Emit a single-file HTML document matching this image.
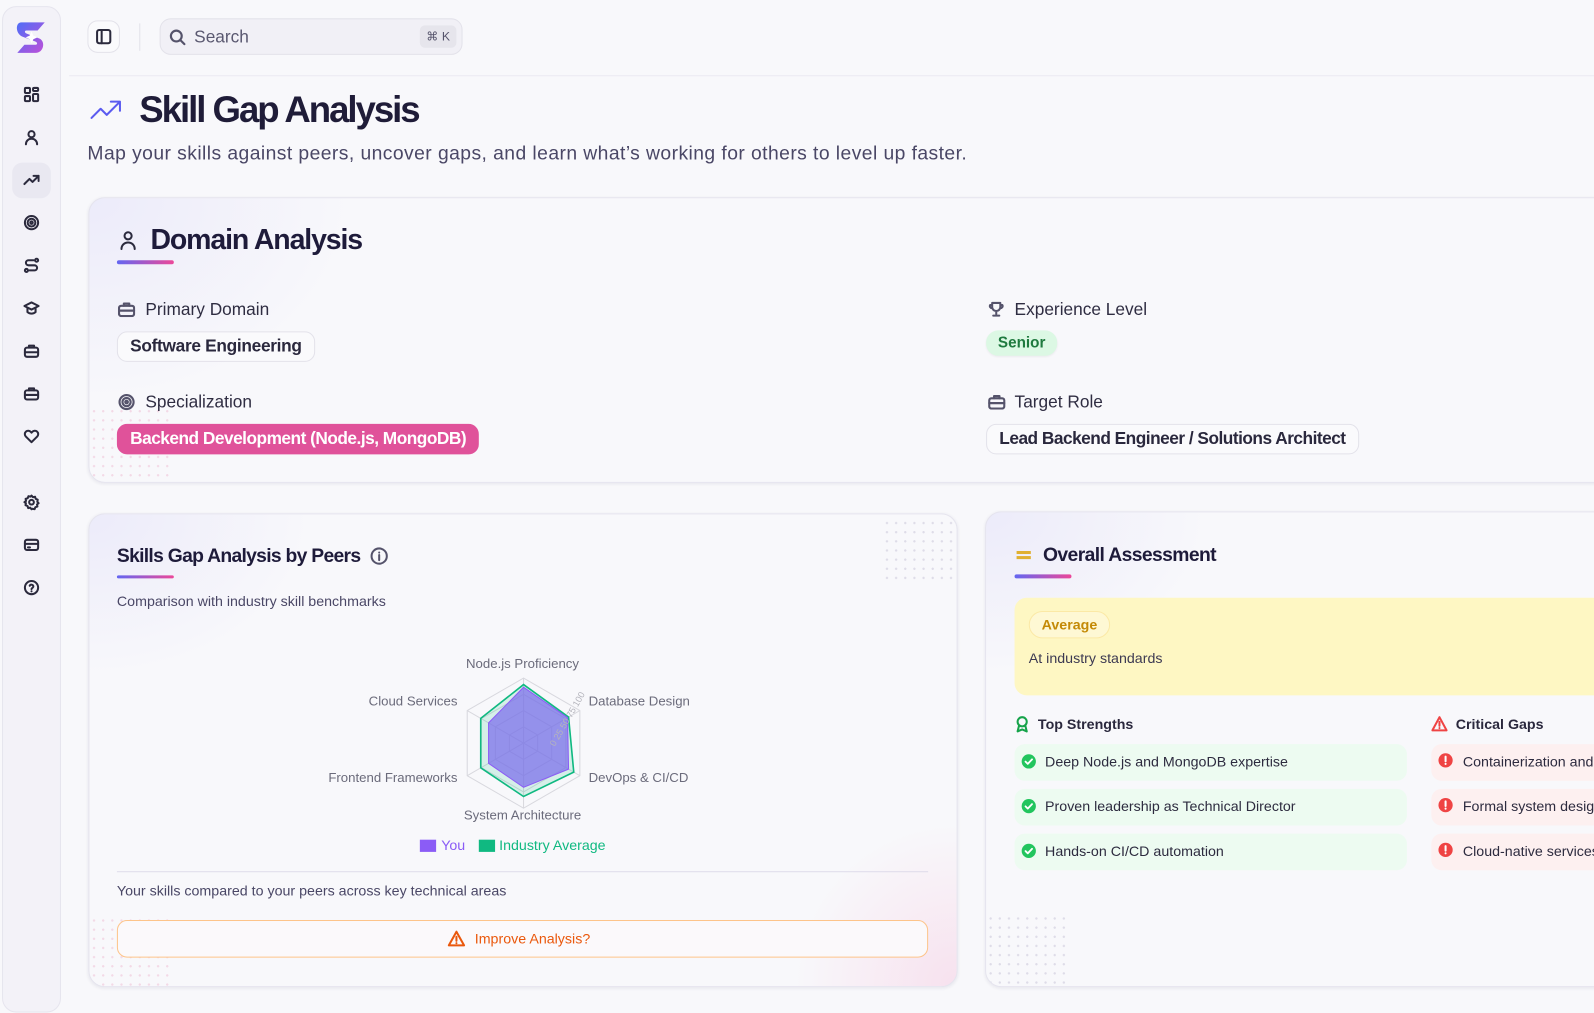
<!DOCTYPE html>
<html><head><meta charset="utf-8">
<style>
*{box-sizing:border-box;margin:0;padding:0}
html,body{width:1594px;height:1012px;overflow:hidden;background:#f8f8fb;font-family:"Liberation Sans",sans-serif;color:#1e1b3a}
#w{position:absolute;left:0;top:0;width:1568px;height:996px;transform:scale(1.01658);transform-origin:0 0;background:#f8f8fb;overflow:hidden}
.a{position:absolute}
.t{position:absolute;white-space:nowrap;line-height:1}
.ic{position:absolute;fill:none;stroke:#2b2a3d;stroke-width:2;stroke-linecap:round;stroke-linejoin:round}
.card{position:absolute;border:1px solid #e5e4ee;border-radius:16px;background:#f8f8fb;box-shadow:0 1px 3px rgba(30,27,58,.08);overflow:hidden}
.ul{position:absolute;height:4px;border-radius:2px;background:linear-gradient(90deg,#6366f1,#ec4899)}
.chip{position:absolute;border:1px solid #e3e2ea;border-radius:10px;background:#fafafc;font-weight:bold;font-size:17px;color:#2a283d;padding:0 12px;line-height:28px;white-space:nowrap;letter-spacing:-.3px}
.g{position:absolute;height:36px;border-radius:10px;background:#edfbf1}
.r{position:absolute;height:36px;border-radius:10px;background:#fdf0f0}
.lbl{font-size:17px;color:#2f2d42}
.item{font-size:14px;color:#2d2b3f}
.dots{position:absolute;background-image:radial-gradient(#dedce8 1px,transparent 1.3px);background-size:9px 9px}
</style></head><body><div id="w">

<!-- sidebar -->
<div class="a" style="left:2px;top:6px;width:58px;height:990px;border:1px solid #e6e5ee;border-radius:14px;background:#f3f2f8"></div>
<svg class="a" style="left:13px;top:19px" width="36" height="36" viewBox="0 0 36 36"><defs><linearGradient id="lg" x1="0" y1="0" x2="1" y2="1"><stop offset="0" stop-color="#4f6ef7"/><stop offset="1" stop-color="#c04fd8"/></linearGradient></defs><path d="M8 3h23l-7 8H13c-2 0-2 2 0 3l13 5c6 3 4 14-4 14H4l7-8h11c2 0 2-2 0-3L9 17C2 14 2 3 8 3z" fill="url(#lg)"/><path d="M18 12l1.8 4 4 1.8-4 1.8-1.8 4-1.8-4-4-1.8 4-1.8z" fill="#fff"/></svg>
<div class="a" style="left:12px;top:160px;width:38px;height:35px;border-radius:10px;background:#e9e8f1"></div>
<svg class="ic" style="left:23px;top:85px" width="16" height="16" viewBox="0 0 16 16" stroke-width="1.6"><rect x="1.5" y="1.5" width="5" height="5" rx="1"/><rect x="9.5" y="1.5" width="5" height="3" rx="1"/><rect x="9.5" y="7.5" width="5" height="7" rx="1"/><rect x="1.5" y="9.5" width="5" height="5" rx="1"/></svg>
<svg class="ic" style="left:23px;top:127px" width="16" height="16" viewBox="0 0 16 16" stroke-width="1.6"><circle cx="8" cy="5" r="3"/><path d="M2.5 15c0-3.5 2.5-5.5 5.5-5.5s5.5 2 5.5 5.5"/></svg>
<svg class="ic" style="left:23px;top:169px" width="16" height="16" viewBox="0 0 16 16" stroke-width="1.8"><path d="M1 12l5-5 3 3 6-6M10 4h5v5"/></svg>
<svg class="ic" style="left:23px;top:211px" width="16" height="16" viewBox="0 0 16 16" stroke-width="1.6"><circle cx="8" cy="8" r="6.5"/><circle cx="8" cy="8" r="3.8"/><circle cx="8" cy="8" r="1.2"/></svg>
<svg class="ic" style="left:23px;top:253px" width="16" height="16" viewBox="0 0 16 16" stroke-width="1.6"><circle cx="3" cy="13" r="1.5"/><circle cx="13" cy="3" r="1.5"/><path d="M10 3H5a2.5 2.5 0 000 5h6a2.5 2.5 0 010 5H6"/></svg>
<svg class="ic" style="left:23px;top:295px" width="16" height="16" viewBox="0 0 16 16" stroke-width="1.6"><path d="M1 6l7-3.5L15 6l-7 3.5z"/><path d="M4 8v4c2 2 6 2 8 0V8"/></svg>
<svg class="ic" style="left:23px;top:337px" width="16" height="16" viewBox="0 0 16 16" stroke-width="1.6"><rect x="1.5" y="5" width="13" height="9" rx="2"/><path d="M5.5 5V3h5v2M1.5 9.5h13"/></svg>
<svg class="ic" style="left:23px;top:379px" width="16" height="16" viewBox="0 0 16 16" stroke-width="1.6"><rect x="1.5" y="5" width="13" height="9" rx="2"/><path d="M5.5 5V3h5v2M1.5 9.5h13"/></svg>
<svg class="ic" style="left:23px;top:421px" width="16" height="16" viewBox="0 0 16 16" stroke-width="1.6"><path d="M8 14L2.3 8.3a3.3 3.3 0 014.9-4.5L8 4.6l.8-.8a3.3 3.3 0 014.9 4.5z"/></svg>
<svg class="ic" style="left:23px;top:486px" width="16" height="16" viewBox="0 0 16 16" stroke-width="1.5"><circle cx="8" cy="8" r="2.3"/><path d="M8 1.5l1.4 1.6 2.1-.4.6 2 2 .8-.4 2.1L15 9l-1.6 1.2.4 2.1-2 .6-.8 2-2.1-.4L8 15l-1.2-1.6-2.1.4-.6-2-2-.8.4-2.1L1 8l1.6-1.2-.4-2.1 2-.6.8-2 2.1.4z"/></svg>
<svg class="ic" style="left:23px;top:528px" width="16" height="16" viewBox="0 0 16 16" stroke-width="1.6"><rect x="1.5" y="3" width="13" height="10" rx="2"/><path d="M1.5 7h13M4.5 10.5h2"/></svg>
<svg class="ic" style="left:23px;top:570px" width="16" height="16" viewBox="0 0 16 16" stroke-width="1.6"><circle cx="8" cy="8" r="6.5"/><path d="M6.2 6.2a1.9 1.9 0 013.6.7c0 1.3-1.8 1.5-1.8 2.6M8 11.6v.1"/></svg>

<!-- topbar -->
<div class="a" style="left:68px;top:74px;width:1500px;height:1px;background:#eceaf2"></div>
<div class="a" style="left:86px;top:20px;width:32px;height:32px;border:1px solid #e3e2ea;border-radius:10px;background:#fafafc"></div>
<svg class="ic" style="left:94px;top:28px" width="16" height="16" viewBox="0 0 16 16" stroke-width="1.5"><rect x="1.5" y="1.5" width="13" height="13" rx="2"/><path d="M6 1.5v13"/></svg>
<div class="a" style="left:137px;top:23px;width:1px;height:27px;background:#e3e2ea"></div>
<div class="a" style="left:157px;top:18px;width:298px;height:36px;border:1px solid #e3e2ea;border-radius:11px;background:#f1f0f6"></div>
<svg class="ic" style="left:166px;top:28px;stroke:#55536b" width="17" height="17" viewBox="0 0 16 16" stroke-width="1.6"><circle cx="7" cy="7" r="5"/><path d="M11 11l3.5 3.5"/></svg>
<div class="t" style="left:191px;top:28px;font-size:17px;color:#5a5870">Search</div>
<div class="a" style="left:413px;top:25px;width:36px;height:22px;border-radius:5px;background:#e6e5ec;font-size:12px;color:#55536b;text-align:center;line-height:22px">⌘ K</div>

<!-- title -->
<svg class="ic" style="left:88px;top:96px;stroke:#5b5bf0" width="34" height="24" viewBox="0 0 34 24" stroke-width="3"><path d="M2 20l9-9 6 6 13-13M21 4h9v9"/></svg>
<div class="t" style="left:137px;top:90px;font-size:36px;font-weight:bold;letter-spacing:-2px;color:#1f1c38">Skill Gap Analysis</div>
<div class="t" style="left:86px;top:142px;font-size:19px;color:#4a4766;letter-spacing:.42px">Map your skills against peers, uncover gaps, and learn what’s working for others to level up faster.</div>

<!-- domain card -->
<div class="card" style="left:87px;top:194px;width:1500px;height:281px;background:radial-gradient(ellipse 260px 200px at 0 0,#ecebfa,rgba(248,248,251,0))">
<div class="dots" style="left:0;top:205px;width:80px;height:76px;background-image:radial-gradient(#f3d9e6 1px,transparent 1.3px)"></div>
</div>
<svg class="ic" style="left:117px;top:226px" width="18" height="20" viewBox="0 0 18 20" stroke-width="2"><circle cx="9" cy="6" r="3.5"/><path d="M2.5 19c0-4 3-6.5 6.5-6.5s6.5 2.5 6.5 6.5"/></svg>
<div class="t" style="left:148px;top:222px;font-size:28px;font-weight:bold;letter-spacing:-1.1px">Domain Analysis</div>
<div class="ul" style="left:115px;top:256px;width:56px;height:4px"></div>

<svg class="ic" style="left:116px;top:297px;stroke:#55536b" width="17" height="15" viewBox="0 0 16 14" stroke-width="1.5"><rect x="1" y="3.5" width="14" height="9.5" rx="2"/><path d="M5.5 3.5V1.5h5v2M1 8h14"/></svg>
<div class="t lbl" style="left:143px;top:296px">Primary Domain</div>
<div class="chip" style="left:115px;top:326px">Software Engineering</div>
<svg class="ic" style="left:116px;top:387px;stroke:#55536b" width="17" height="17" viewBox="0 0 16 16" stroke-width="1.5"><circle cx="8" cy="8" r="6.5"/><circle cx="8" cy="8" r="3.8"/><circle cx="8" cy="8" r="1.2"/></svg>
<div class="t lbl" style="left:143px;top:387px">Specialization</div>
<div class="chip" style="left:115px;top:417px;background:#e0529a;border-color:#e0529a;color:#fff;letter-spacing:-.5px">Backend Development (Node.js, MongoDB)</div>

<svg class="ic" style="left:972px;top:296px;stroke:#55536b" width="16" height="16" viewBox="0 0 16 16" stroke-width="1.5"><path d="M4 2h8v4a4 4 0 01-8 0zM4 4H2a2 2 0 002 3M12 4h2a2 2 0 01-2 3M8 10v3M5 14.5h6"/></svg>
<div class="t lbl" style="left:998px;top:296px">Experience Level</div>
<div class="a" style="left:970px;top:325px;width:70px;height:25px;border-radius:12px;background:#dcf8e4;box-shadow:0 1px 2px rgba(0,0,0,.06);color:#1f7a3f;font-weight:bold;font-size:15px;text-align:center;line-height:25px">Senior</div>
<svg class="ic" style="left:972px;top:388px;stroke:#55536b" width="17" height="15" viewBox="0 0 16 14" stroke-width="1.5"><rect x="1" y="3.5" width="14" height="9.5" rx="2"/><path d="M5.5 3.5V1.5h5v2M1 8h14"/></svg>
<div class="t lbl" style="left:998px;top:387px">Target Role</div>
<div class="chip" style="left:970px;top:417px;letter-spacing:-.5px">Lead Backend Engineer / Solutions Architect</div>

<!-- left card -->
<div class="card" style="left:87px;top:505px;width:855px;height:466px;background:radial-gradient(ellipse 220px 160px at 0 0,#ecebfa,rgba(248,248,251,0)),radial-gradient(ellipse 160px 160px at 100% 100%,#f7e1ee,rgba(248,248,251,0))">
<div class="dots" style="left:780px;top:4px;width:70px;height:64px"></div>
<div class="dots" style="left:0;top:395px;width:80px;height:70px;background-image:radial-gradient(#f3d9e6 1px,transparent 1.3px)"></div>
</div>
<div class="t" style="left:115px;top:538px;font-size:19px;font-weight:bold;letter-spacing:-.7px">Skills Gap Analysis by Peers</div>
<svg class="ic" style="left:364px;top:538px;stroke:#55536b" width="18" height="18" viewBox="0 0 18 18" stroke-width="1.4"><circle cx="9" cy="9" r="7.5"/><path d="M9 8v5M9 5.5v.1"/></svg>
<div class="ul" style="left:115px;top:566px;width:56px;height:3px"></div>
<div class="t" style="left:115px;top:584px;font-size:14px;color:#4a4766">Comparison with industry skill benchmarks</div>

<svg class="a" style="left:0;top:0" width="960" height="860" viewBox="0 0 960 860">
<g fill="none" stroke="#d8d8de" stroke-width="1">
<polygon points="515,667 570.4,699 570.4,763 515,795 459.6,763 459.6,699"/>
<polygon points="515,683 556.6,707 556.6,755 515,779 473.4,755 473.4,707"/>
<polygon points="515,699 542.7,715 542.7,747 515,763 487.3,747 487.3,715"/>
<polygon points="515,715 528.9,723 528.9,739 515,747 501.1,739 501.1,723"/>
<path d="M515,731V667M515,731L570.4,699M515,731L570.4,763M515,731V795M515,731L459.6,763M515,731L459.6,699"/>
</g>
<polygon points="515,673.4 559.3,705.4 564.4,759.5 515,783.5 472.9,755.3 472.9,706.7" fill="rgba(16,185,129,.15)" stroke="#10b981" stroke-width="1.6"/>
<polygon points="515,676 558.3,706 559.3,756.6 515,774.5 480.6,750.9 480.6,711.1" fill="rgba(124,108,235,.72)" stroke="#8b5cf6" stroke-width="1"/>
<g font-family="Liberation Sans" font-size="9" fill="#b4b4bc" transform="rotate(-60 560 706)"><text x="528" y="708">0 25 50 75 100</text></g>
<g font-family="Liberation Sans" font-size="13" fill="#6b6b7b">
<text x="514" y="657" text-anchor="middle">Node.js Proficiency</text>
<text x="450" y="694" text-anchor="end">Cloud Services</text>
<text x="579" y="694">Database Design</text>
<text x="450" y="769" text-anchor="end">Frontend Frameworks</text>
<text x="579" y="769">DevOps &amp; CI/CD</text>
<text x="514" y="806" text-anchor="middle">System Architecture</text>
</g>
<rect x="413" y="826" width="16" height="12" fill="#8b5cf6"/>
<text x="434" y="836" font-family="Liberation Sans" font-size="14" fill="#8b5cf6">You</text>
<rect x="471" y="826" width="16" height="12" fill="#10b981"/>
<text x="491" y="836" font-family="Liberation Sans" font-size="14" fill="#10b981">Industry Average</text>
</svg>
<div class="a" style="left:115px;top:857px;width:798px;height:1px;background:#dedcea"></div>
<div class="t" style="left:115px;top:869px;font-size:14px;color:#4a4766">Your skills compared to your peers across key technical areas</div>
<div class="a" style="left:115px;top:905px;width:798px;height:37px;border:1.5px solid #fdc48a;border-radius:10px;background:#fbf9fb"></div>
<svg class="ic" style="left:440px;top:915px;stroke:#ea580c" width="18" height="17" viewBox="0 0 18 17" stroke-width="1.6"><path d="M9 1.5L16.5 15h-15z"/><path d="M9 6.5v4M9 12.8v.1"/></svg>
<div class="t" style="left:467px;top:916px;font-size:14px;color:#ea580c;font-weight:500">Improve Analysis?</div>

<!-- right card -->
<div class="card" style="left:969px;top:503px;width:650px;height:468px;background:radial-gradient(ellipse 220px 160px at 0 0,#ecebfa,rgba(248,248,251,0))">
<div class="dots" style="left:0;top:395px;width:80px;height:72px"></div>
</div>
<div class="a" style="left:1000px;top:542px;width:14px;height:2.5px;background:#e0b030"></div>
<div class="a" style="left:1000px;top:547px;width:14px;height:2.5px;background:#e0b030"></div>
<div class="t" style="left:1026px;top:537px;font-size:19px;font-weight:bold;letter-spacing:-.6px">Overall Assessment</div>
<div class="ul" style="left:998px;top:565px;width:56px;height:4px"></div>
<div class="a" style="left:998px;top:588px;width:620px;height:96px;border-radius:12px;background:#fef7c3"></div>
<div class="a" style="left:1012px;top:601px;width:80px;height:27px;border:1px solid #fbe9a6;border-radius:14px;background:#fef8d4;color:#c48a06;font-weight:bold;font-size:14px;text-align:center;line-height:25px">Average</div>
<div class="t" style="left:1012px;top:640px;font-size:14px;color:#3d3a52">At industry standards</div>

<svg class="ic" style="left:998px;top:704px;stroke:#16a34a" width="15" height="17" viewBox="0 0 15 17" stroke-width="1.6"><circle cx="7.5" cy="6" r="4.5"/><path d="M4.5 9.5L3 15.5l4.5-2 4.5 2-1.5-6"/></svg>
<div class="t" style="left:1021px;top:705px;font-size:14px;font-weight:bold;color:#2a283d">Top Strengths</div>
<svg class="ic" style="left:1408px;top:704px;stroke:#ef4444" width="16" height="16" viewBox="0 0 16 16" stroke-width="1.5"><path d="M8 1.5L15 14.5H1z"/><path d="M8 6v4M8 12.2v.1"/></svg>
<div class="t" style="left:1432px;top:705px;font-size:14px;font-weight:bold;color:#2a283d">Critical Gaps</div>

<div class="g" style="left:998px;top:732px;width:386px"></div>
<div class="g" style="left:998px;top:776px;width:386px"></div>
<div class="g" style="left:998px;top:820px;width:386px"></div>
<div class="r" style="left:1408px;top:732px;width:200px"></div>
<div class="r" style="left:1408px;top:776px;width:200px"></div>
<div class="r" style="left:1408px;top:820px;width:200px"></div>

<svg class="a" style="left:1004px;top:741px" width="16" height="16" viewBox="0 0 16 16"><circle cx="8" cy="8" r="7" fill="#22c55e"/><path d="M4.8 8.2l2.2 2.2 4.2-4.4" fill="none" stroke="#fff" stroke-width="1.8" stroke-linecap="round" stroke-linejoin="round"/></svg>
<svg class="a" style="left:1004px;top:785px" width="16" height="16" viewBox="0 0 16 16"><circle cx="8" cy="8" r="7" fill="#22c55e"/><path d="M4.8 8.2l2.2 2.2 4.2-4.4" fill="none" stroke="#fff" stroke-width="1.8" stroke-linecap="round" stroke-linejoin="round"/></svg>
<svg class="a" style="left:1004px;top:829px" width="16" height="16" viewBox="0 0 16 16"><circle cx="8" cy="8" r="7" fill="#22c55e"/><path d="M4.8 8.2l2.2 2.2 4.2-4.4" fill="none" stroke="#fff" stroke-width="1.8" stroke-linecap="round" stroke-linejoin="round"/></svg>
<div class="t item" style="left:1028px;top:742px">Deep Node.js and MongoDB expertise</div>
<div class="t item" style="left:1028px;top:786px">Proven leadership as Technical Director</div>
<div class="t item" style="left:1028px;top:830px">Hands-on CI/CD automation</div>

<svg class="a" style="left:1414px;top:740px" width="16" height="16" viewBox="0 0 16 16"><circle cx="8" cy="8" r="7" fill="#ef4444"/><path d="M8 4.3v4.5M8 11.3v.2" stroke="#fff" stroke-width="2" stroke-linecap="round"/></svg>
<svg class="a" style="left:1414px;top:784px" width="16" height="16" viewBox="0 0 16 16"><circle cx="8" cy="8" r="7" fill="#ef4444"/><path d="M8 4.3v4.5M8 11.3v.2" stroke="#fff" stroke-width="2" stroke-linecap="round"/></svg>
<svg class="a" style="left:1414px;top:828px" width="16" height="16" viewBox="0 0 16 16"><circle cx="8" cy="8" r="7" fill="#ef4444"/><path d="M8 4.3v4.5M8 11.3v.2" stroke="#fff" stroke-width="2" stroke-linecap="round"/></svg>
<div class="t item" style="left:1439px;top:742px">Containerization and orchestration</div>
<div class="t item" style="left:1439px;top:786px">Formal system design documentation</div>
<div class="t item" style="left:1439px;top:830px">Cloud-native services experience</div>

</div></body></html>
